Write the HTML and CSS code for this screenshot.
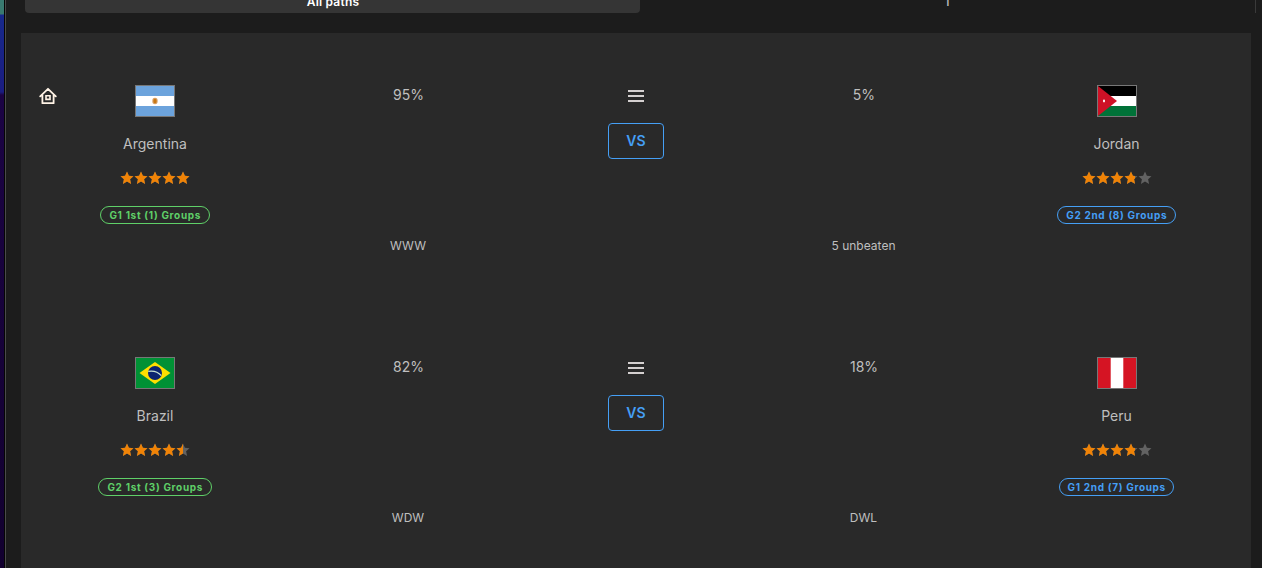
FILE: index.html
```html
<!DOCTYPE html>
<html lang="en">
<head>
    <meta charset="UTF-8">
    <meta name="viewport" content="width=device-width, initial-scale=1.0">
    <title>Match paths</title>
    <link rel="stylesheet" href="styles.css">
</head>
<body>
    <svg class="symbols" aria-hidden="true">
        <symbol id="stars" viewBox="0 0 70 14">
            <path id="star" d="M7 .5 8.9 4.700 13.500 5.200 10.100 8.300 11.100 12.900 7 10.600 2.900 12.900 3.900 8.300 .5 5.200 5.100 4.700Z"/>
            <use href="#star" x="14"/>
            <use href="#star" x="28"/>
            <use href="#star" x="42"/>
            <use href="#star" x="56"/>
        </symbol>
        <symbol id="menu" viewBox="0 0 16 14">
            <path d="M0 2h16M0 7h16M0 12h16" stroke="currentColor" stroke-width="2"/>
        </symbol>
    </svg>

    <div class="desktop-edge"></div>
    <main class="window">
        <nav class="tabs">
            <a class="tab active">All paths</a>
            <a class="tab">I</a>
        </nav>

        <div class="matches">
            <section class="match">
                <div class="venue">
                    <svg class="home" viewBox="0 0 18 18">
                        <path d="M1.2 9.3 9 1.8l7.8 7.5M3.4 8v8.2h11.2V8" fill="none" stroke="currentColor" stroke-width="1.8" stroke-linejoin="round" stroke-linecap="round"/>
                        <path d="M7 8.8h4v3.6H7z" fill="none" stroke="currentColor" stroke-width="1.6"/>
                    </svg>
                </div>
                <div class="team">
                    <svg class="flag" viewBox="0 0 38 30" preserveAspectRatio="none">
                        <path fill="#6ca3dc" d="M0 0h38v30H0z"/>
                        <path fill="#fff" d="M0 10h38v10H0z"/>
                        <ellipse cx="19" cy="15" rx="2.7" ry="3.2" fill="#d9a066"/>
                        <ellipse cx="19" cy="15" rx="1.6" ry="2.2" fill="#c87814"/>
                    </svg>
                    <div class="name">Argentina</div>
                    <div class="rating">
                        <svg class="stars"><use href="#stars"/></svg>
                        <div class="rating-fill" style="width: 100%"><svg class="stars"><use href="#stars"/></svg></div>
                    </div>
                    <span class="badge first">G1 1st (1) Groups</span>
                </div>
                <div class="odds">
                    <div class="percent">95%</div>
                    <div class="form">WWW</div>
                </div>
                <div class="versus">
                    <svg class="menu"><use href="#menu"/></svg>
                    <button class="vs">VS</button>
                </div>
                <div class="odds">
                    <div class="percent">5%</div>
                    <div class="form">5 unbeaten</div>
                </div>
                <div class="team">
                    <svg class="flag" viewBox="0 0 38 30" preserveAspectRatio="none">
                        <path d="M0 0h38v10H0z"/>
                        <path fill="#fff" d="M0 10h38v10H0z"/>
                        <path fill="#007238" d="M0 20h38v10H0z"/>
                        <path fill="#ce1126" d="M0 0l19 15L0 30z"/>
                        <ellipse cx="6" cy="15" rx="1" ry="1.4" fill="#fff"/>
                    </svg>
                    <div class="name">Jordan</div>
                    <div class="rating">
                        <svg class="stars"><use href="#stars"/></svg>
                        <div class="rating-fill" style="width: 76%"><svg class="stars"><use href="#stars"/></svg></div>
                    </div>
                    <span class="badge second">G2 2nd (8) Groups</span>
                </div>
            </section>

            <section class="match">
                <div class="venue"></div>
                <div class="team">
                    <svg class="flag" viewBox="0 0 38 30" preserveAspectRatio="none">
                        <path fill="#009135" d="M0 0h38v30H0z"/>
                        <path fill="#fedf00" d="M3.5 15 19 4l15.500 11L19 26z"/>
                        <circle cx="19" cy="15" r="7" fill="#0b2470"/>
                        <path d="M12.300 13.300c5-.8 10 .8 13 4.400" fill="none" stroke="#c9e4d4" stroke-width="1.200"/>
                    </svg>
                    <div class="name">Brazil</div>
                    <div class="rating">
                        <svg class="stars"><use href="#stars"/></svg>
                        <div class="rating-fill" style="width: 90%"><svg class="stars"><use href="#stars"/></svg></div>
                    </div>
                    <span class="badge first">G2 1st (3) Groups</span>
                </div>
                <div class="odds">
                    <div class="percent">82%</div>
                    <div class="form">WDW</div>
                </div>
                <div class="versus">
                    <svg class="menu"><use href="#menu"/></svg>
                    <button class="vs">VS</button>
                </div>
                <div class="odds">
                    <div class="percent">18%</div>
                    <div class="form">DWL</div>
                </div>
                <div class="team">
                    <svg class="flag" viewBox="0 0 38 30" preserveAspectRatio="none">
                        <path fill="#d51423" d="M0 0h38v30H0z"/>
                        <path fill="#fff" d="M12.700 0h12.600v30H12.700z"/>
                    </svg>
                    <div class="name">Peru</div>
                    <div class="rating">
                        <svg class="stars"><use href="#stars"/></svg>
                        <div class="rating-fill" style="width: 76%"><svg class="stars"><use href="#stars"/></svg></div>
                    </div>
                    <span class="badge second">G1 2nd (7) Groups</span>
                </div>
            </section>
        </div>
    </main>
</body>
</html>
```
FILE: styles.css
```css
* {
    box-sizing: border-box;
}
body {
    display: flex;
    height: 100vh;
    margin: 0;
    overflow: hidden;
    background-color: #1c1c1c;
    color: #bfbfbf;
    font-family: Inter, sans-serif;
    font-size: 14px;
}
svg {
    display: block;
}
.symbols {
    position: absolute;
    width: 0;
    height: 0;
}
/* desktop showing beside the window */
.desktop-edge {
    flex: none;
    width: 6px;
    border-right: 1px solid #4a4a4a;
    background: linear-gradient(to right, transparent 4px, #050505 4px),
        linear-gradient(#397a70 0 14px, #17298c 15px, #1a1c80 92px, #1b0344 95px, #12002f);
}
.window {
    flex: 1;
    padding: 0 11px 0 15px;
}
.tabs {
    display: flex;
    height: 13px;
    margin: 0 -5px 20px 4px;
    border-right: 1px solid #3a3a3a;
}
.tab {
    display: flex;
    flex: 1;
    align-items: flex-end;
    justify-content: center;
    height: 13px;
    padding: 0 0 3px 1px;
    font-size: 12px;
    font-weight: 500;
    line-height: 16px;
    letter-spacing: 0.2px;
}
.tab.active {
    border-radius: 0 0 4px 4px;
    background-color: #353535;
    color: #fff;
    font-weight: 600;
}
.matches {
    background-color: #292929;
}
.match {
    display: grid;
    grid-template-columns: 54px 160px 346px 110px 345px 161px 54px;
    height: 272px;
    padding-top: 52px;
}
.venue {
    padding: 2px 0 0 18px;
}
.home {
    width: 18px;
    height: 18px;
    color: #fff3e6;
}
.team {
    display: flex;
    flex-direction: column;
    align-items: center;
}
.flag {
    width: 40px;
    height: 32px;
    border: 1px solid #777;
}
.name {
    margin-top: 17px;
    line-height: 20px;
}
.rating {
    position: relative;
    width: 70px;
    height: 14px;
    margin-top: 17px;
    color: #626262;
}
.rating-fill {
    position: absolute;
    top: 0;
    left: 0;
    height: 14px;
    overflow: hidden;
    color: #f08306;
}
.stars {
    width: 70px;
    height: 14px;
    fill: currentColor;
}
.badge {
    height: 18px;
    margin-top: 21px;
    padding: 0 7.5px 0 8px;
    border: 1px solid;
    border-radius: 9px;
    font-size: 10px;
    font-weight: 700;
    line-height: 16px;
    letter-spacing: 0.68px;
    white-space: nowrap;
}
.badge.first {
    color: #5fd068;
}
.badge.second {
    color: #459ff5;
}
.odds {
    text-align: center;
}
.percent {
    padding-left: 1px;
    line-height: 20px;
}
.form {
    margin-top: 132px;
    font-size: 12px;
    line-height: 18px;
}
.versus {
    display: flex;
    flex-direction: column;
    align-items: center;
}
.menu {
    width: 16px;
    height: 14px;
    margin-top: 4px;
    color: #d4d0d0;
}
.vs {
    width: 56px;
    height: 36px;
    margin-top: 20px;
    padding: 0 0 1px;
    border: 1px solid #459ff5;
    border-radius: 4px;
    background: none;
    color: #459ff5;
    font: 600 14px Inter, sans-serif;
}
```
